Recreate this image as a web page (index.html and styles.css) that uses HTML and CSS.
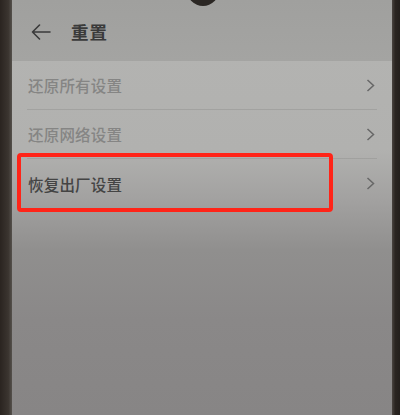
FILE: index.html
```html
<!DOCTYPE html>
<html lang="zh-CN">
<head>
<meta charset="utf-8">
<title>重置</title>
<link rel="stylesheet" href="styles.css">
</head>
<body>
<div class="phone">
  <div class="bezel bezel-left"></div>
  <div class="screen">
    <div class="notch"></div>
    <header class="header">
      <svg class="back" width="20" height="16" viewBox="0 0 20 16" aria-hidden="true">
        <path d="M19 8H1.5M8.5 1L1.5 8l7 7" fill="none" stroke="#3a3a3a" stroke-width="1.6" stroke-linecap="round" stroke-linejoin="round"/>
      </svg>
      <h1 class="title">重置</h1>
    </header>
    <ul class="list">
      <li class="row">
        <span class="label muted">还原所有设置</span>
        <svg class="chev" width="9" height="13" viewBox="0 0 9 13"><path d="M1.5 1l6 5.5-6 5.5" fill="none" stroke="#676767" stroke-width="1.5"/></svg>
      </li>
      <li class="row">
        <span class="label muted">还原网络设置</span>
        <svg class="chev" width="9" height="13" viewBox="0 0 9 13"><path d="M1.5 1l6 5.5-6 5.5" fill="none" stroke="#676767" stroke-width="1.5"/></svg>
      </li>
      <li class="row last">
        <span class="label strong">恢复出厂设置</span>
        <svg class="chev" width="9" height="13" viewBox="0 0 9 13"><path d="M1.5 1l6 5.5-6 5.5" fill="none" stroke="#676767" stroke-width="1.5"/></svg>
      </li>
    </ul>
    <div class="highlight"></div>
  </div>
  <div class="bezel bezel-right"></div>
</div>
</body>
</html>
```

FILE: styles.css
```css
html, body {
  margin: 0;
  padding: 0;
  background: #2e2924;
}
body {
  font-family: "Noto Sans CJK SC", "Noto Sans", sans-serif;
}
.phone {
  display: flex;
  width: 400px;
  height: 415px;
}
.bezel-left {
  width: 12px;
  background: linear-gradient(90deg, #2a2420 0%, #3b3530 70%, #55514c 100%);
}
.bezel-right {
  width: 8px;
  background: linear-gradient(90deg, #4a4541 0%, #2a2521 40%, #231f1c 100%);
}
.screen {
  flex: 1;
  position: relative;
  overflow: hidden;
  background: linear-gradient(180deg, #b4b4b2 0px, #b1b1af 150px, #a2a1a0 200px, #908f8e 250px, #8a8888 320px, #878585 415px);
}
.notch {
  position: absolute;
  left: 175px;
  top: -10px;
  width: 32px;
  height: 16px;
  border-radius: 0 0 16px 16px;
  background: #2b2724;
}
.header {
  height: 61px;
  display: flex;
  align-items: center;
  padding-left: 19px;
  background: linear-gradient(180deg, #a0a09e 0%, #a4a4a2 100%);
  box-sizing: border-box;
  padding-top: 2px;
}
.back {
  display: block;
}
.title {
  margin: 0 0 0 20px;
  font-size: 17.5px;
  font-weight: 700;
  color: #3a3a3a;
  letter-spacing: 1px;
}
.list {
  list-style: none;
  margin: 0;
  padding: 0;
}
.row {
  height: 49px;
  margin: 0 15px;
  padding-left: 1px;
  display: flex;
  align-items: center;
  justify-content: space-between;
  border-bottom: 1px solid rgba(150, 150, 148, 0.55);
  box-sizing: border-box;
}
.row.last {
  border-bottom: none;
}
.label {
  font-size: 15.5px;
  font-weight: 500;
  letter-spacing: 0.2px;
}
.muted {
  color: #858584;
}
.strong {
  color: #444444;
}
.chev {
  display: block;
  margin-right: 2px;
}
.highlight {
  position: absolute;
  left: 5px;
  top: 153px;
  width: 316px;
  height: 59px;
  box-sizing: border-box;
  border: 4px solid #ff2418;
  border-radius: 4px;
}
```
